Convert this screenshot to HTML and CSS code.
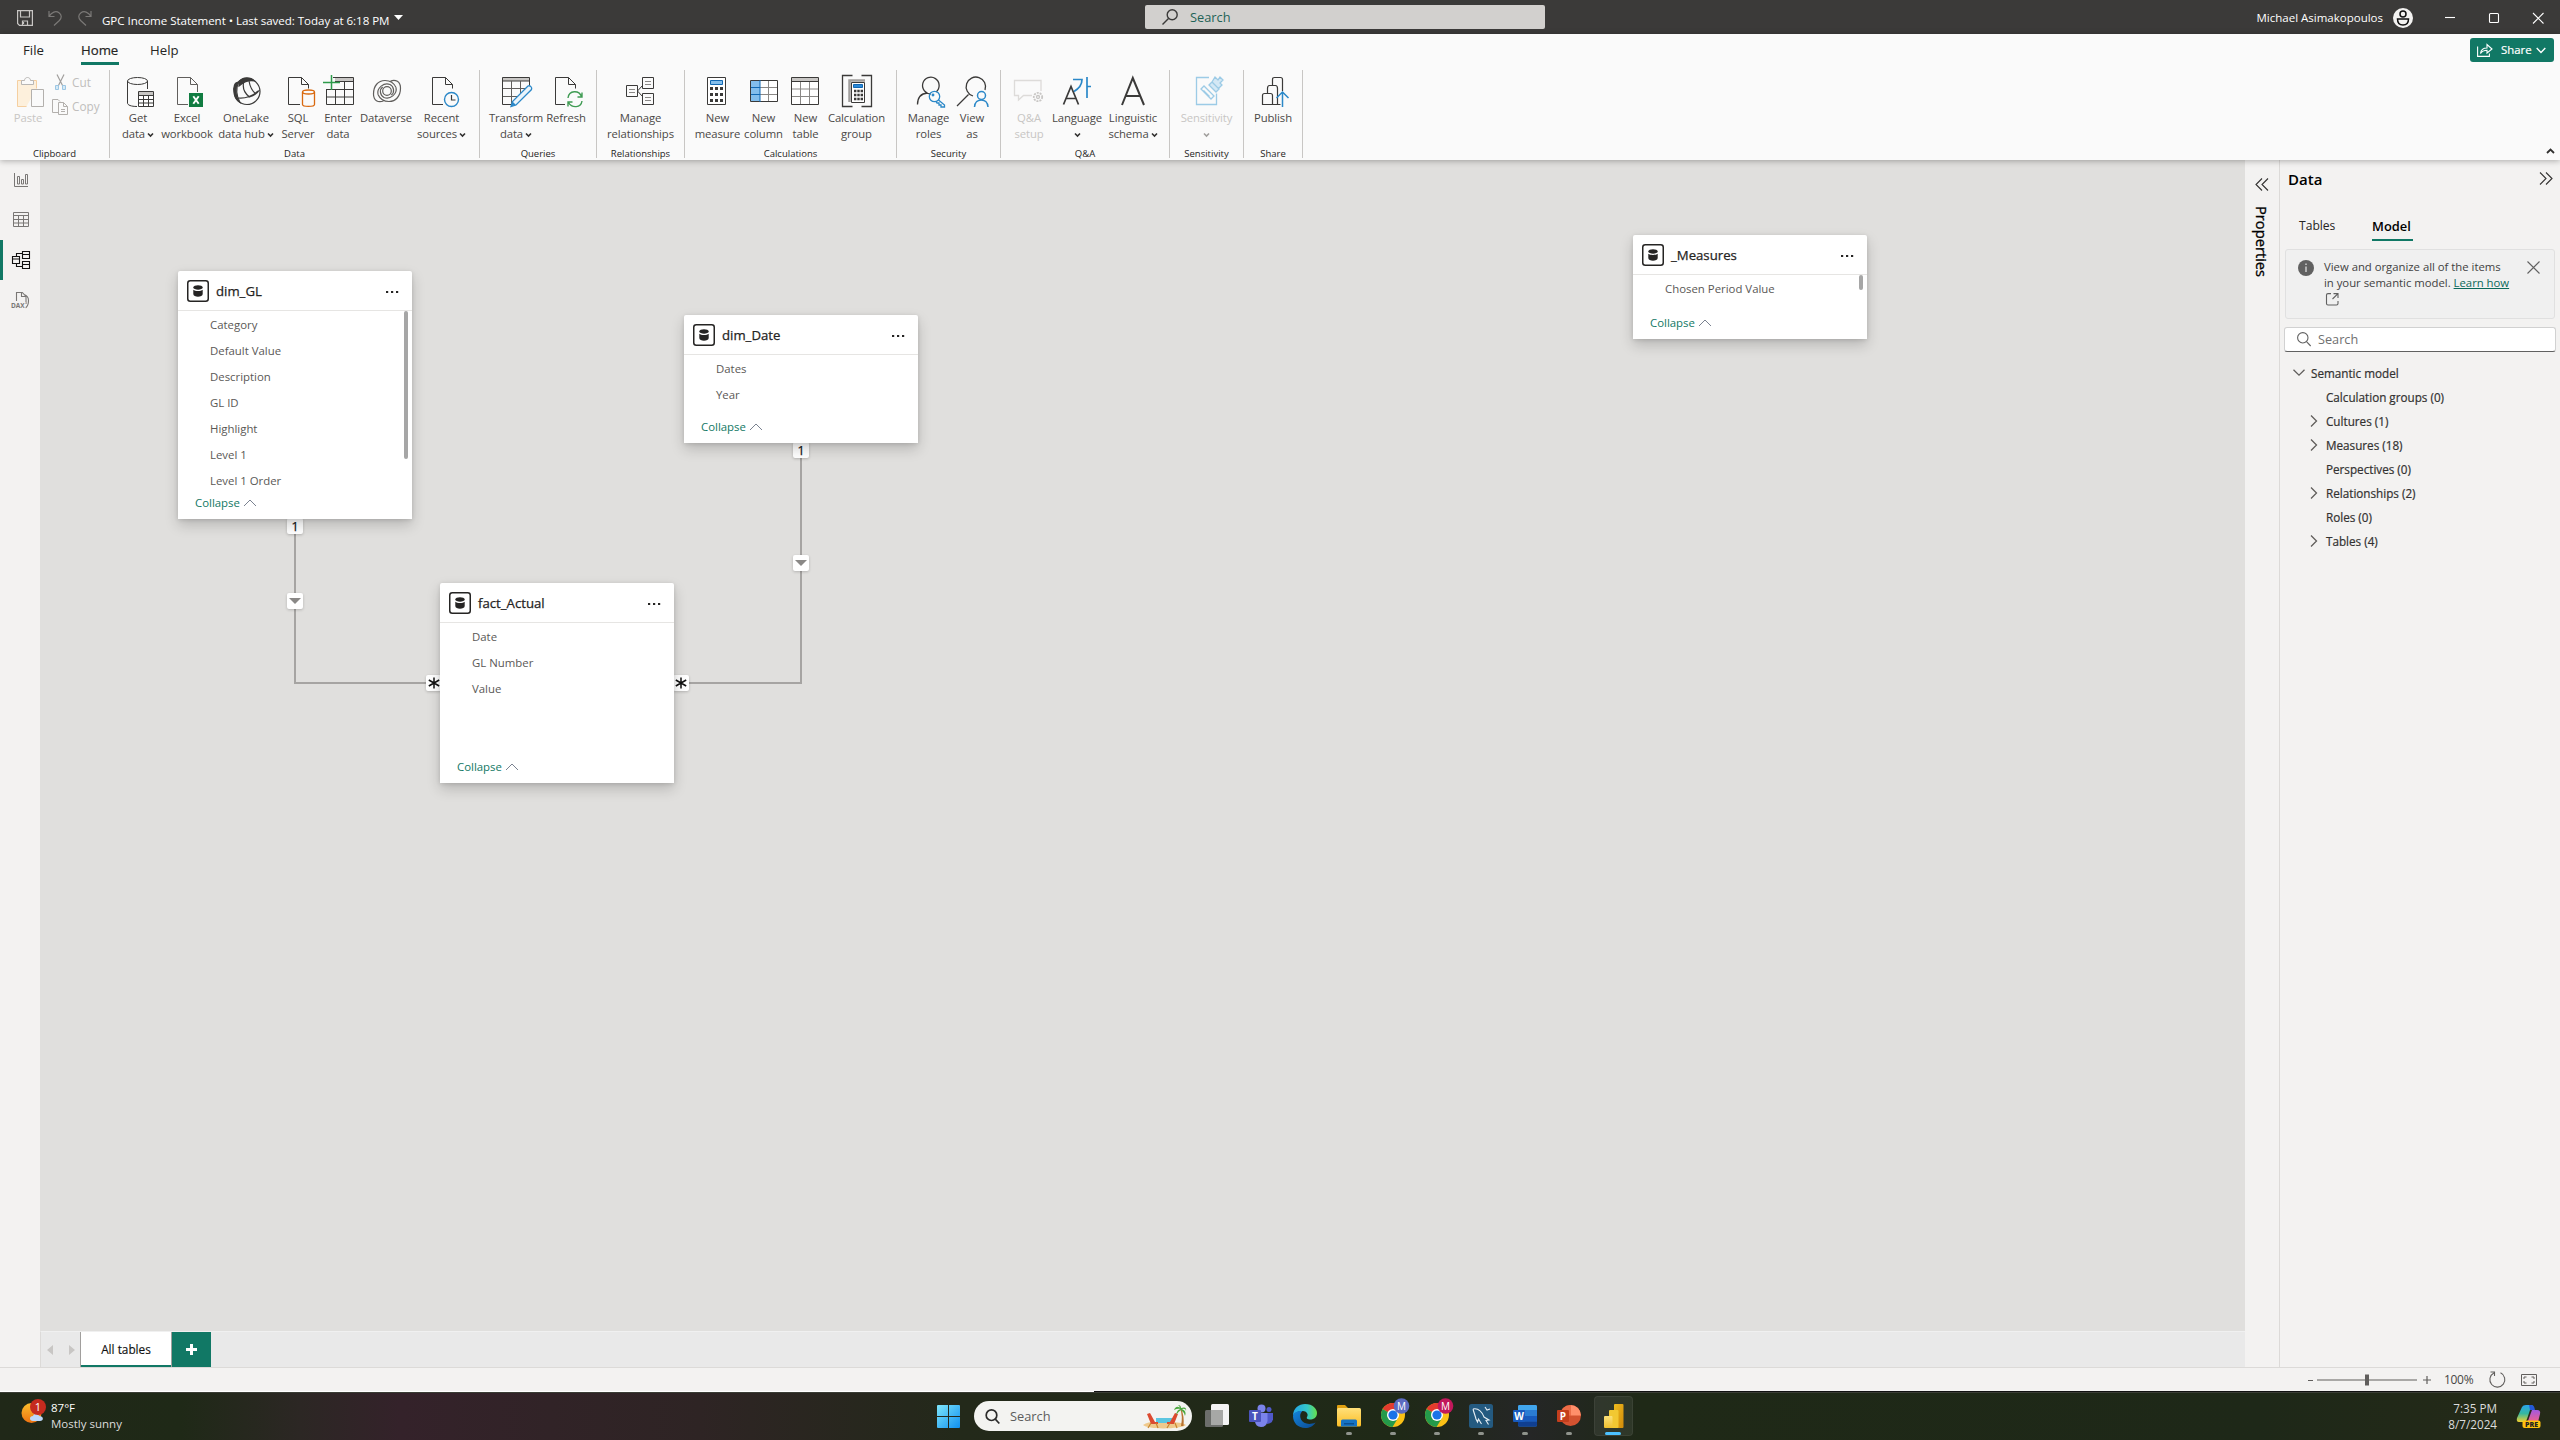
FILE: index.html
```html
<!DOCTYPE html>
<html lang="en">
<head>
<meta charset="utf-8">
<title>GPC Income Statement</title>
<link rel="stylesheet" href="styles.css">
</head>
<body>
<svg class="defs" width="0" height="0">
  <defs>
    <symbol id="chev" viewBox="0 0 7 6"><path d="M1 1.5 3.5 4 6 1.5" fill="none" stroke="currentColor" stroke-width="1.6"/></symbol>
    <symbol id="expand" viewBox="0 0 8 12"><path d="M1 0.5 6.5 6 1 11.500" fill="none" stroke="#605e5c" stroke-width="1.3"/></symbol>
    <symbol id="up" viewBox="0 0 14 8"><path d="M1 7 7 1 13 7" fill="none" stroke="#7a8290" stroke-width="1"/></symbol>
    <symbol id="dbicon" viewBox="0 0 22 22"><rect x="0.75" y="0.75" width="20.500" height="20.500" rx="2.500" fill="#fff" stroke="#252423" stroke-width="1.500"/><path d="M6.300 7.500C6.300 4.600 15.700 4.600 15.700 7.500S6.300 10.300 6.300 7.500Z" fill="#252423"/><path d="M6.300 9.800C8 11.400 14 11.400 15.700 9.800V14C15.700 17.500 6.300 17.500 6.300 14Z" fill="#252423"/></symbol>
    <symbol id="dots" viewBox="0 0 14 4"><path d="M1 1h2.200v2H1zM6 1h2.200v2H6zM11 1h2.200v2H11z" fill="#252423"/></symbol>
    <symbol id="chrome" viewBox="0 0 24 24"><circle cx="12" cy="12" r="12" fill="#fbc116"/><path d="M12 12 1.600 6A12 12 0 0 1 22.400 6Z" fill="#e33b2e"/><path d="M12 12 1.600 6A12 12 0 0 0 11.500 24L17 15Z" fill="#249a4a"/><path d="M12 6h10.400A12 12 0 0 0 12 0Z" fill="#e33b2e"/><circle cx="12" cy="12" r="6" fill="#fff"/><circle cx="12" cy="12" r="4.600" fill="#1a73e8"/></symbol>
    <linearGradient id="win" x1="0" y1="0" x2="1" y2="1"><stop offset="0" stop-color="#7ee6fb"/><stop offset="1" stop-color="#0f8ff0"/></linearGradient>
    <linearGradient id="sun" x1="0" y1="0" x2="0" y2="1"><stop offset="0" stop-color="#fbbd2c"/><stop offset="1" stop-color="#ee7211"/></linearGradient>
    <linearGradient id="edgeTop" x1="0" y1="0" x2="1" y2="0"><stop offset="0" stop-color="#23a5e8"/><stop offset="0.6" stop-color="#35c8c8"/><stop offset="1" stop-color="#66e04a"/></linearGradient>
    <linearGradient id="edgeLow" x1="0" y1="0" x2="1" y2="1"><stop offset="0" stop-color="#1385dc"/><stop offset="1" stop-color="#0c4a92"/></linearGradient>
    <linearGradient id="folder" x1="0" y1="0" x2="0" y2="1"><stop offset="0" stop-color="#ffe07a"/><stop offset="1" stop-color="#fbbd25"/></linearGradient>
    <linearGradient id="pbi" x1="0" y1="0" x2="1" y2="1"><stop offset="0" stop-color="#eebc1e"/><stop offset="1" stop-color="#d18a0a"/></linearGradient>
    <linearGradient id="pbi2" x1="0" y1="0" x2="0" y2="1"><stop offset="0" stop-color="#fbe17a"/><stop offset="1" stop-color="#f0c12e"/></linearGradient>
    <linearGradient id="copA" x1="0" y1="0" x2="0" y2="1"><stop offset="0" stop-color="#2aa3ec"/><stop offset="0.5" stop-color="#35b8a0"/><stop offset="1" stop-color="#f2d02c"/></linearGradient>
    <linearGradient id="copB" x1="0" y1="0" x2="0" y2="1"><stop offset="0" stop-color="#a259e0"/><stop offset="1" stop-color="#f0608a"/></linearGradient>
  </defs>
</svg>
<div class="app">

<header class="titlebar">
  <div class="quick">
    <svg width="16" height="16" viewBox="0 0 16 16" fill="none" stroke="#c8c6c4" stroke-width="1.200"><path d="M.6.6h14.800v14.800H2.500L.6 13.500z"/><path d="M3.500 1v6h9V1M5.500 15v-4h5v4M6.500 12v2"/></svg>
    <svg width="14" height="16" viewBox="0 0 14 16" fill="none" stroke="#7b7977" stroke-width="1.200"><path d="M1 1v5.500h5.500M1.200 6.300C3.500 2 8 .5 11 2.800s2.800 5.200.4 7.700L6 15.500"/></svg>
    <svg width="14" height="16" viewBox="0 0 14 16" fill="none" stroke="#7b7977" stroke-width="1.200"><path d="M13 1v5.500H7.500M12.800 6.300C10.500 2 6 .5 3 2.800S.2 8 2.600 10.500L8 15.500"/></svg>
    <span class="doc">GPC Income Statement • Last saved: Today at 6:18 PM</span>
    <svg class="docarrow" width="9" height="5" viewBox="0 0 9 5"><path d="M0 0h9L4.500 5z" fill="#fff"/></svg>
  </div>
  <div class="topsearch">
    <svg width="16" height="16" viewBox="0 0 16 16" fill="none" stroke="#3b3a39" stroke-width="1.400"><circle cx="10.200" cy="5.800" r="5"/><path d="M6.500 9.500.5 15.500"/></svg>
    <span>Search</span>
  </div>
  <div class="account">
    <span>Michael Asimakopoulos</span>
    <svg class="avatar" width="20" height="20" viewBox="0 0 20 20"><circle cx="10" cy="10" r="10" fill="#f3f2f1"/><circle cx="10" cy="6" r="3" fill="none" stroke="#111" stroke-width="1.500"/><path d="M4.500 11h11c0 4-2 6-5.500 6s-5.500-2-5.500-6z" fill="none" stroke="#111" stroke-width="1.500"/></svg>
    <svg class="winctl" width="99" height="12" viewBox="0 0 99 12" fill="none" stroke="#fff" stroke-width="1.100"><path d="M0 5.500h10"/><rect x="44.500" y="1.500" width="9" height="9" rx="1"/><path d="M88 1l10.500 10.500M98.500 1 88 11.500"/></svg>
  </div>
</header>

<section class="ribbon">
  <div class="tabs">
    <span class="tab-file">File</span><span class="tab-home">Home</span><span class="tab-help">Help</span>
    <div class="share">
      <svg width="16" height="14" viewBox="0 0 16 14" fill="none" stroke="#fff" stroke-width="1.100"><path d="M.6 3.500v9.900h11.800v-3M3.500 10.500c.5-4 3-5.500 6.500-5.500V1.500L15 6l-5 4V7.200c-3 0-5 .8-6.500 3.300z"/></svg>
      <span>Share</span>
      <svg width="10" height="7" viewBox="0 0 10 7"><path d="M.7 1 5 5.500 9.300 1" fill="none" stroke="#fff" stroke-width="1.400"/></svg>
    </div>
  </div>
  <div class="groups">
    <div class="group g-clip">
      <div class="btns">
        <div class="btn w34 off">
          <svg class="ic" viewBox="0 0 32 33" fill="none"><path d="M14.500 31.500h-9v-26h19v8" stroke="#f5cfa0" fill="#fdf0dc"/><path d="M9.500 9.500v-4h3c0-4 6-4 6 0h3v4z" stroke="#b9b7b5" fill="#fafafa"/><path d="M19.500 14.500h12v17h-12z" stroke="#b3b0ad" fill="#fafafa"/></svg>
          <span>Paste</span>
        </div>
        <div class="small">
          <div><svg width="16" height="17" viewBox="0 0 16 17" fill="none"><path d="M5 .5 10.800 12M12 .5 6.200 12" stroke="#a19f9d" stroke-width="1.200"/><path d="M3.500 11.500h3v4h-3zM10.500 11.500h3v4h-3z" stroke="#9cc7e4" fill="#d6e9f5"/></svg>Cut</div>
          <div><svg width="16" height="17" viewBox="0 0 16 17" fill="none" stroke="#b3b0ad"><path d="M6 14.500H.5v-13H6l2 2"/><path d="M6.500 4.500h5l4 4v8h-9zM11.500 4.500v4h4M9 11.500h4M9 13.500h4"/></svg>Copy</div>
        </div>
      </div>
      <div class="gl">Clipboard</div>
    </div>
    <div class="group g-data">
      <div class="btns">
        <div class="btn w44"><svg class="ic" viewBox="0 0 32 33" fill="none" stroke="#3b3a39"><path d="M15 31.500C9 31.500 5.500 30 5.500 28V6"/><ellipse cx="15.500" cy="6" rx="10" ry="3.500"/><path d="M25.500 6v8"/><path d="M16.500 16.500h15v15h-15z" fill="#fff"/><path d="M17 17h14v3H17z" fill="#c8c6c4" stroke="none"/><path d="M16.500 20.500h15M16.500 24.500h15M16.500 28h15M21.500 20.500v11M26.500 20.500v11"/></svg><span>Get<br>data<svg class="cv"><use href="#chev"/></svg></span></div>
        <div class="btn w54"><svg class="ic" viewBox="0 0 32 33" fill="none" stroke="#605e5c"><path d="M17 29.500H6.500v-27h13l7 7V17M19.500 2.500v7h7"/><path d="M18 18h14v14H18z" fill="#107c41" stroke="none"/><path d="m22.300 21.200 5.400 7.600M27.700 21.200l-5.400 7.600" stroke="#fff" stroke-width="1.900"/></svg><span>Excel<br>workbook</span></div>
        <div class="btn w64"><svg class="ic" viewBox="0 0 32 33" fill="none" stroke="#3b3a39" stroke-width="1.200"><circle cx="17" cy="16.500" r="13"/><path d="M4.500 18C2.500 12 5 7 8.500 7.500 5.500 14 6 20 10 27.500 7 26 5 22 4.500 18z" fill="#3b3a39"/><path d="M9 6.500C13 2 20 1.500 24.500 6 19 5 14 6.500 9 11z" fill="#3b3a39"/><path d="M13.500 8c-1 6 2 11 6 14 4-1 8-4 10-7M19 6c1 6 3 10 7 13M8 23c6 .5 14-1 20-7"/></svg><span>OneLake<br>data hub<svg class="cv"><use href="#chev"/></svg></span></div>
        <div class="btn w40"><svg class="ic" viewBox="0 0 32 33" fill="none" stroke="#3b3a39"><path d="M18 29.500H6.500v-27h13l7 7v4M19.500 2.500v7h7"/><path d="M20.500 17v12.500c0 2.500 12 2.500 12 0V17" stroke="#d9690f" stroke-width="1.300"/><ellipse cx="26.500" cy="17" rx="6" ry="2" stroke="#d9690f" stroke-width="1.300"/></svg><span>SQL<br>Server</span></div>
        <div class="btn w40"><svg class="ic" viewBox="0 0 32 33" fill="none" stroke="#3b3a39"><path d="M13 3h18v3H13z" fill="#c8c6c4" stroke="none"/><path d="M11 2.500h20.500v27h-27V14M13 6.500h18.500M4.500 14.500h27M4.500 22h27M13.500 14v15.500M22.500 6.500v23"/><path d="M9.500 0v15M1 7.500h17" stroke="#2e9b4b" stroke-width="1.500"/></svg><span>Enter<br>data</span></div>
        <div class="btn w56"><svg class="ic" viewBox="0 0 32 33" fill="none" stroke="#605e5c" stroke-width="1.200"><circle cx="17" cy="16" r="4.300"/><path d="M13.500 26C8 28 3.500 25.500 3.500 19 3.500 11 8 5.500 15 5.500c5 0 9 2.500 11 7M20.500 6c5-2 10 .5 10 7 0 8-4.500 13.500-11.500 13.500-5 0-9-2.500-11-7"/><path d="M8 19.500C6.500 13 14 7 20 9.500c4 2 5 8 1.300 10.500M26 12.500c1.500 6.500-6 12.500-12 10-4-2-5-8-1.300-10.500"/></svg><span>Dataverse</span></div>
        <div class="btn w55"><svg class="ic" viewBox="0 0 32 33" fill="none" stroke="#3b3a39"><path d="M17 29.500H6.500v-27h13l7 7v4M19.500 2.500v7h7"/><circle cx="25.500" cy="24.500" r="7" stroke="#2b88c8" stroke-width="1.400" fill="#fafafa"/><path d="M25.500 20v5h4" stroke-width="1.200"/></svg><span>Recent<br>sources<svg class="cv"><use href="#chev"/></svg></span></div>
      </div>
      <div class="gl">Data</div>
    </div>
    <div class="group g-query">
      <div class="btns">
        <div class="btn w58"><svg class="ic" viewBox="0 0 32 33" fill="none" stroke="#605e5c"><path d="M2.500 2.500h27v3.500h-27z" fill="#c8c6c4" stroke="#3b3a39"/><path d="M12 29.500H2.500V3M29.500 3v8" stroke="#3b3a39"/><path d="M3 13.500h25M3 21.500h16M11.500 6v23M20.500 6v12"/><path d="m28 11-15.500 15.500-1.500 5 5-1.500L31.500 14.500c1-2-1.500-4.500-3.500-3.500z" fill="#eaf4fb" stroke="#2b88c8" stroke-width="1.300"/><path d="m12.500 26.500-1.500 5 5-1.500z" fill="#2b88c8" stroke="none"/></svg><span>Transform<br>data<svg class="cv"><use href="#chev"/></svg></span></div>
        <div class="btn w42"><svg class="ic" viewBox="0 0 32 33" fill="none" stroke="#3b3a39"><path d="M15 29.500H5.500v-27h13l7 7v4M18.500 2.500v7h7"/><path d="M18 23c1-8 11-8 13.500-1.500M32 17.500v4.500h-4.500M32 26c-1 7-10 7.500-13.500 1.500M18 31.500V27h4.500" stroke="#3f9b53" stroke-width="1.400"/></svg><span>Refresh</span></div>
      </div>
      <div class="gl">Queries</div>
    </div>
    <div class="group g-rel">
      <div class="btns">
        <div class="btn w77"><svg class="ic rel" viewBox="0 0 32 33" fill="none" stroke="#3b3a39"><path d="M2.500 10.500h11v11h-11zM18.500 2.500h11v11h-11zM18.500 18.500h11v11h-11zM13.500 16l5-5.500M13.500 16l5 5.500"/><path d="M5 14.500h6M5 17.500h6M21 6.500h6M21 9.500h6M21 22.500h6M21 25.500h6" stroke="#8a8886"/></svg><span>Manage<br>relationships</span></div>
      </div>
      <div class="gl">Relationships</div>
    </div>
    <div class="group g-calc">
      <div class="btns">
        <div class="btn w47"><svg class="ic" viewBox="0 0 32 33" fill="none" stroke="#3b3a39"><path d="M5.500 2.500h18v27h-18z" fill="#fff"/><path d="M8.500 5.500h12v4h-12z" fill="#83beec" stroke="#1168b3"/><path d="M8 13.500h13M8 19.500h13M8 25.500h13" stroke-width="3" stroke-dasharray="3 2"/></svg><span>New<br>measure</span></div>
        <div class="btn w45"><svg class="ic" viewBox="0 0 32 33" fill="none" stroke="#3b3a39"><path d="M2.500 5.500h27v21h-27z" fill="#fff"/><path d="M12 12.500h17M12 19.500h17M20.500 6v20" stroke="#8a8886"/><path d="M3 6h9v20H3z" fill="#83beec" stroke="none"/><path d="M12 5v22M3 12.500h9M3 19.500h9" stroke="#1168b3"/></svg><span>New<br>column</span></div>
        <div class="btn w39"><svg class="ic" viewBox="0 0 32 33" fill="none" stroke="#3b3a39"><path d="M1.500 2.500h27v27h-27z" fill="#fff"/><path d="M2 3h26v3.500H2z" fill="#c8c6c4" stroke="none"/><path d="M1.500 6.500h27"/><path d="M2 14h26M2 21.500h26M10.500 7v22M19.500 7v22" stroke="#8a8886"/></svg><span>New<br>table</span></div>
        <div class="btn w63"><svg class="ic" viewBox="0 0 32 33" fill="none" stroke="#3b3a39"><path d="M11.500.5h-10v31h10M20.500.5h10v31h-10" stroke-width="1.300"/><path d="M8.500 27V5.500H24" stroke="#a19f9d" stroke-width="2.500"/><path d="M10.500 7.500h13v20h-13z" fill="#fff"/><path d="M12.500 9.500h9v3h-9z" fill="#2b88d8" stroke="#1168b3"/><path d="M13 16h9M13 20h9M13 24h9" stroke-width="2.400" stroke-dasharray="2.400 .9"/></svg><span>Calculation<br>group</span></div>
      </div>
      <div class="gl">Calculations</div>
    </div>
    <div class="group g-sec">
      <div class="btns">
        <div class="btn w49"><svg class="ic" viewBox="0 0 32 33" fill="none" stroke="#3b3a39" stroke-width="1.300"><path d="M23 17a8.300 8.300 0 1 0-5 1.800M4.500 29.500c0-7 4-11 10-11.500"/><g stroke="#2b88c8"><circle cx="21.500" cy="21.500" r="5.200"/><circle cx="20" cy="20" r=".8"/><path d="m25.500 25 6 5v2H28v-2h-2v-2h-2l-1-1.500"/></g></svg><span>Manage<br>roles</span></div>
        <div class="btn w38"><svg class="ic" viewBox="0 0 32 33" fill="none" stroke="#3b3a39" stroke-width="1.300"><path d="M17 21a9.700 9.700 0 1 1 12-6M12.500 19.500 1 31"/><g stroke="#2b88c8" stroke-width="1.500"><circle cx="25.500" cy="20.500" r="4"/><path d="M18.500 32c.5-9.500 13-9.500 13.500 0"/></g></svg><span>View<br>as</span></div>
      </div>
      <div class="gl">Security</div>
    </div>
    <div class="group g-qa">
      <div class="btns">
        <div class="btn w40 off"><svg class="ic" viewBox="0 0 32 33" fill="none" stroke="#dddbd9" stroke-width="1.300"><path d="M28 16V5.500H1.500v15h4v4.500l5-4.500H19"/><circle cx="25" cy="22" r="4.200" stroke="#c8c6c4" stroke-width="1.800" stroke-dasharray="2 1"/><circle cx="25" cy="22" r="1.500" stroke="#c8c6c4"/></svg><span>Q&amp;A<br>setup</span></div>
        <div class="btn w56"><svg class="ic" viewBox="0 0 32 33" fill="none" stroke="#3b3a39" stroke-width="1.700"><path d="M2.500 29.500 10 11.500 17.500 29.500M5 23.500h10"/><path d="M12 4.500h9c0 6-3 9-8 12M26 2v21M26 11.500h4" stroke="#2b88c8"/></svg><span>Language<br><svg class="cv solo"><use href="#chev"/></svg></span></div>
        <div class="btn w56"><svg class="ic" viewBox="0 0 32 33" fill="none" stroke="#3b3a39" stroke-width="2"><path d="M5 30 15.800 3 27 30M8.500 21h15"/></svg><span>Linguistic<br>schema<svg class="cv"><use href="#chev"/></svg></span></div>
      </div>
      <div class="gl">Q&amp;A</div>
    </div>
    <div class="group g-sens">
      <div class="btns">
        <div class="btn w63 off"><svg class="ic" viewBox="0 0 32 33" fill="none" stroke="#9ccbe6" stroke-width="1.300"><path d="M18 2.500H5.500v27h20v-11"/><path d="m10 14 3-3 10 10-3 3zM12.500 15.500l6 6"/><path d="m18 10 3-3 7 7-3 3zM21 7l3-5 3 3 2-3 3 3-3 3 2 2-4 4" fill="#d4e8f5"/></svg><span>Sensitivity<br><svg class="cv solo"><use href="#chev"/></svg></span></div>
      </div>
      <div class="gl">Sensitivity</div>
    </div>
    <div class="group g-share">
      <div class="btns">
        <div class="btn w44"><svg class="ic" viewBox="0 0 32 33" fill="none" stroke="#3b3a39" stroke-width="1.200"><path d="M15.500 29.500h-10v-9q0-2 2-2h6q2 0 2 2zM10.500 18.500v-5q0-3 2-3h6q2 0 2 3v16h-5M15.500 10.500v-6q0-2 2-2h6q2 0 2 2V16M20.500 29.500h3"/><path d="M25.500 32V17M19.500 23l6-6 6 6" stroke="#2b88c8" stroke-width="1.500"/></svg><span>Publish</span></div>
      </div>
      <div class="gl">Share</div>
    </div>
    <svg class="pin" width="9" height="6" viewBox="0 0 9 6"><path d="M1 5 4.500 1.500 8 5" fill="none" stroke="#323130" stroke-width="1.800"/></svg>
  </div>
</section>

<main class="work">
  <nav class="rail">
    <div><svg width="18" height="18" viewBox="0 0 18 18" fill="none" stroke="#797775"><path d="M2.500 2v13.500H16M5.500 5.500h2v7.500h-2zM9.500 8.500h2V13h-2zM13.500 3.500h2V13h-2z"/></svg></div>
    <div><svg width="18" height="18" viewBox="0 0 18 18" fill="none" stroke="#797775"><path d="M1.500 1.500h15v14h-15zM1.500 4.500h15M1.500 8.500h15M1.500 12h15M6.500 4.500v11M11.500 4.500v11"/></svg></div>
    <div class="on"><svg width="18" height="18" viewBox="0 0 18 18" fill="none" stroke="#111" stroke-width="1.100"><path d="M.5 5.500h7v7h-7zM.5 8h7M10.500.5h7v7h-7zM10.500 3.500h7M10.500 10.500h7v7h-7zM10.500 13.500h7M4.500 5.500v-3h6M4.500 12.500v3h6"/></svg></div>
    <div><svg width="18" height="18" viewBox="0 0 18 18" fill="none" stroke="#797775" stroke-width="1.100"><path d="M4.500 10V1.500h5.800l3.700 4v7.500M9.500 1.500v4h4.500M12 3.500c3 1 4.500 3 4.500 6 0 4-1 6-3 7.500"/><text x="-1" y="16.500" class="dax">DAX</text></svg></div>
  </nav>

  <div class="center">
    <div class="canvas">
      <svg class="wires" width="2205" height="1171" fill="none" stroke="#a6a4a2" stroke-width="2"><path d="M255 359V523H400M761 283V523H634"/></svg>

      <span class="tag end t1">1</span>
      <span class="tag t2"><svg width="12" height="6"><path d="M0 0h12L6 6z" fill="#8a8886"/></svg></span>
      <span class="tag side t3"><svg width="12" height="12" viewBox="0 0 12 12" stroke="#111" stroke-width="1.500"><path d="M6 .5v11M.8 3l10.400 6M11.200 3 .8 9"/></svg></span>
      <span class="tag end t4">1</span>
      <span class="tag t5"><svg width="12" height="6"><path d="M0 0h12L6 6z" fill="#8a8886"/></svg></span>
      <span class="tag side t6"><svg width="12" height="12" viewBox="0 0 12 12" stroke="#111" stroke-width="1.500"><path d="M6 .5v11M.8 3l10.400 6M11.200 3 .8 9"/></svg></span>

      <article class="card c-gl">
        <header><svg width="22" height="22"><use href="#dbicon"/></svg><b>dim_GL</b><svg width="14" height="4"><use href="#dots"/></svg></header>
        <ul><li>Category</li><li>Default Value</li><li>Description</li><li>GL ID</li><li>Highlight</li><li>Level 1</li><li>Level 1 Order</li></ul>
        <i class="bar long"></i>
        <footer>Collapse<svg width="14" height="8"><use href="#up"/></svg></footer>
      </article>
      <article class="card c-date">
        <header><svg width="22" height="22"><use href="#dbicon"/></svg><b>dim_Date</b><svg width="14" height="4"><use href="#dots"/></svg></header>
        <ul><li>Dates</li><li>Year</li></ul>
        <footer>Collapse<svg width="14" height="8"><use href="#up"/></svg></footer>
      </article>
      <article class="card c-fact">
        <header><svg width="22" height="22"><use href="#dbicon"/></svg><b>fact_Actual</b><svg width="14" height="4"><use href="#dots"/></svg></header>
        <ul><li>Date</li><li>GL Number</li><li>Value</li></ul>
        <footer>Collapse<svg width="14" height="8"><use href="#up"/></svg></footer>
      </article>
      <article class="card c-meas">
        <header><svg width="22" height="22"><use href="#dbicon"/></svg><b>_Measures</b><svg width="14" height="4"><use href="#dots"/></svg></header>
        <ul><li>Chosen Period Value</li></ul>
        <i class="bar"></i>
        <footer>Collapse<svg width="14" height="8"><use href="#up"/></svg></footer>
      </article>
    </div>
    <div class="pages">
      <svg class="arrows" width="28" height="10" viewBox="0 0 28 10" fill="#c8c6c4"><path d="M6 0v10L0 5zM22 0v10l6-5z"/></svg>
      <span class="page">All tables</span>
      <span class="plus"><svg width="11" height="11"><path d="M5.500 0v11M0 5.500h11" stroke="#fff" stroke-width="3"/></svg></span>
    </div>
  </div>

  <aside class="props">
    <svg width="14" height="13" viewBox="0 0 14 13" fill="none" stroke="#323130" stroke-width="1.100"><path d="M7 .5l-6 6 6 6M13 .5l-6 6 6 6"/></svg>
    <b>Properties</b>
  </aside>

  <aside class="data">
    <div class="dhead"><b>Data</b><svg width="14" height="13" viewBox="0 0 14 13" fill="none" stroke="#323130" stroke-width="1.100"><path d="M1 .5l6 6-6 6M7 .5l6 6-6 6"/></svg></div>
    <div class="dtabs"><span>Tables</span><b>Model</b></div>
    <div class="note">
      <svg width="16" height="16" viewBox="0 0 16 16"><circle cx="8" cy="8" r="8" fill="#616161"/><path d="M8 3.500v1.500M8 6.500V12" stroke="#dcdcdc" stroke-width="1.300"/></svg>
      <p>View and organize all of the items<br>in your semantic model. <a>Learn how</a><br><svg width="14" height="13" viewBox="0 0 14 13" fill="none" stroke="#616161" stroke-width="1.100"><path d="M6 .6H3Q1.500.6 1.500 2v8.500q0 1.500 1.500 1.500h8.500q1.500 0 1.500-1.500V8M8.500.6H13V5M13 .6 7.500 6"/></svg></p>
      <svg width="13" height="13" viewBox="0 0 13 13"><path d="M.5.5l12 12M12.500.5l-12 12" stroke="#616161" stroke-width="1.100"/></svg>
    </div>
    <div class="dsearch"><svg width="14" height="15" viewBox="0 0 14 15" fill="none" stroke="#616161" stroke-width="1.100"><circle cx="5.800" cy="5.800" r="5.200"/><path d="m9.500 9.700 4.200 4.300"/></svg>Search</div>
    <ul class="tree">
      <li class="root"><svg width="12" height="7" viewBox="0 0 12 7"><path d="M.5.8 6 6.200 11.500.8" fill="none" stroke="#605e5c" stroke-width="1.300"/></svg>Semantic model</li>
      <li>Calculation groups (0)</li>
      <li><svg width="8" height="12"><use href="#expand"/></svg>Cultures (1)</li>
      <li><svg width="8" height="12"><use href="#expand"/></svg>Measures (18)</li>
      <li>Perspectives (0)</li>
      <li><svg width="8" height="12"><use href="#expand"/></svg>Relationships (2)</li>
      <li>Roles (0)</li>
      <li><svg width="8" height="12"><use href="#expand"/></svg>Tables (4)</li>
    </ul>
  </aside>
</main>

<footer class="status">
  <svg width="124" height="12" viewBox="0 0 124 12"><path d="M0 6.500h5M9 6h100M115 6h8M119 2v8" stroke="#605e5c" stroke-width="1.200"/><path d="M57 .5h4v11h-4z" fill="#605e5c"/></svg>
  <span>100%</span>
  <svg width="17" height="17" viewBox="0 0 17 17" fill="none" stroke="#605e5c" stroke-width="1.100"><path d="M11.500 1.800A7.500 7.500 0 1 1 4.800 2M1.500 1h4v4"/></svg>
  <svg width="16" height="12" viewBox="0 0 16 12" fill="none" stroke="#605e5c"><path d="M.5.5h15v11H.5z"/><path d="M5.500 3H3v2M10.500 3H13v2M5.500 9H3V7M10.500 9H13V7"/></svg>
</footer>

<footer class="taskbar">
  <div class="weather">
    <svg width="24" height="24" viewBox="0 0 24 24"><circle cx="10.500" cy="14" r="10" fill="url(#sun)"/><path d="M12 22c-4 0-4-5 0-5 1-3 5-3 6 0 5 0 5 5 1 5z" fill="#bcd8fa"/><circle cx="17" cy="8" r="8" fill="#c52b1f"/><text x="17" y="12" class="bdg">1</text></svg>
    <p><b>87°F</b><br>Mostly sunny</p>
  </div>
  <div class="dock">
    <svg class="start" width="23" height="23" viewBox="0 0 23 23"><path d="M0 1q0-1 1-1h10v11H0zM12 0h10q1 0 1 1v10H12zM0 12h11v11H1q-1 0-1-1zM12 12h11v10q0 1-1 1H12z" fill="url(#win)"/></svg>
    <div class="pill">
      <svg width="15" height="15" viewBox="0 0 15 15" fill="none" stroke="#2b2b2b" stroke-width="1.700"><circle cx="6.500" cy="6.200" r="5.300"/><path d="m10.300 10.200 4 4.300"/></svg>
      <span>Search</span>
      <svg width="43" height="25" viewBox="0 0 43 25"><path d="M0 21c5-4 12-3 21-3s18 0 22 3c-4 4-38 5-43 0z" fill="#efc98c"/><path d="M13 14h17v5H13z" fill="#5cc6e0"/><path d="M4 10l3-1 5 9h3v2H8zM35 10l-3-1-5 9h-3v2h7z" fill="#dc4a30"/><path d="M8 19l-3 5M13 19l2 5M27 19l-3 5M32 19l2 5" stroke="#c8862e" stroke-width="1.200"/><path d="M37 4q3 8 1 18h2.500q1-10-2.500-18z" fill="#b87333"/><path d="M38 5C35 1 32 3 31 6q4-2 7-1-4 0-5 6 3-4 5-5 3 2 4 6 2-5-3-7 4-1 4 2 1-5-5-3 0-3-3-3 2 1 2 4z" fill="#4ba83e"/></svg>
    </div>
    <div class="app-i"><svg width="24" height="24" viewBox="0 0 24 24"><rect x="6" y="0" width="18" height="21" rx="1.500" fill="#f4f4f4"/><rect x="0" y="6" width="18" height="17" rx="1.500" fill="#6c6e6b"/><path d="M6 6h12v15H6z" fill="#a7a8a6"/></svg></div>
    <div class="app-i"><svg width="24" height="24" viewBox="0 0 24 24"><circle cx="12.500" cy="4.500" r="4" fill="#7b83eb"/><circle cx="20" cy="5.500" r="2.500" fill="#5059c9"/><path d="M16 9h8v6.500q-1 4.500-6 4.500z" fill="#5059c9"/><path d="M6 9h12.500v8q-1 6-6.500 6-6-.5-6-6z" fill="#7b83eb"/><rect x="0" y="6" width="12" height="12" rx="1" fill="#4b53bc"/><text x="6" y="15.500" class="let">T</text></svg></div>
    <div class="app-i"><svg width="24" height="24" viewBox="0 0 24 24"><path d="M0 12C0 4 6 0 12 0c8 0 12 5 12 9 0 5-4 6.500-7 6.500-2.500 0-4-1-3-2.500 2-3-1-6-4-6C5 7 1 9 0 12z" fill="url(#edgeTop)"/><path d="M0 12C1 8 5 6.500 9.500 7 7 9 6.500 12 8 15.500c2 4 8 6 14.500 3C20 22.500 16.500 24 12.500 24 5 24 0 19 0 12z" fill="url(#edgeLow)"/></svg></div>
    <div class="app-i run"><svg width="24" height="24" viewBox="0 0 24 24"><path d="M0 2q0-1 1-1h7l3 3v4H0z" fill="#e0a010"/><rect y="4" width="24" height="18.500" rx="1.500" fill="url(#folder)"/><path d="M4 22.500V17q0-1.500 1.500-1.500h13q1.500 0 1.500 1.500v5.500z" fill="#1673c4"/><path d="M7 19h10v1.500H7z" fill="#0b4f92"/></svg></div>
    <div class="app-i run wide"><svg width="28" height="30" viewBox="0 0 28 30"><use href="#chrome" y="4" width="24" height="24"/><circle cx="20.500" cy="7" r="7.800" fill="#5c6bc0"/><text x="20.500" y="10.800" class="let thin">M</text></svg></div>
    <div class="app-i run wide"><svg width="28" height="30" viewBox="0 0 28 30"><use href="#chrome" y="4" width="24" height="24"/><circle cx="20.500" cy="7" r="7.800" fill="#c2185b"/><text x="20.500" y="10.800" class="let thin">M</text></svg></div>
    <div class="app-i run"><svg width="24" height="24" viewBox="0 0 24 24"><rect width="24" height="24" rx="2.500" fill="#245a80"/><path d="M4 5c5-1 9 3 11 8l5 3-3 .5 2.500 4M4 5c1 4 2 6 3 10l1.500 3 1-3 3 5M16 3l2 3 3-1" fill="none" stroke="#e8f0f5" stroke-width="1.100"/></svg></div>
    <div class="app-i run"><svg width="24" height="24" viewBox="0 0 24 24"><rect x="5" y="1" width="19" height="21.500" rx="1.500" fill="#2b7cd3"/><path d="M5 2.500Q5 1 6.500 1h16Q24 1 24 2.500V6H5z" fill="#41a5ee"/><path d="M5 12h19v5.500H5z" fill="#185abd"/><path d="M5 17.500h19V21q0 1.500-1.500 1.500h-16Q5 22.500 5 21z" fill="#103f91"/><rect y="6" width="12" height="12" rx="1" fill="#185abd"/><text x="6" y="15.500" class="let">W</text></svg></div>
    <div class="app-i run"><svg width="24" height="24" viewBox="0 0 24 24"><circle cx="13.500" cy="11.500" r="10.500" fill="#d35230"/><path d="M13.500 1A10.500 10.500 0 0 1 24 11.500H13.500z" fill="#ff8f6b"/><path d="M13.500 1A10.500 10.500 0 0 0 3 11.500h10.500z" fill="#ed6c47"/><rect y="6" width="12" height="12" rx="1" fill="#c43e1c"/><text x="6" y="15.500" class="let">P</text></svg></div>
    <div class="app-i active"><svg width="20" height="24" viewBox="0 0 20 24"><rect x="10" width="9.500" height="24" rx="1" fill="url(#pbi)"/><rect x="5" y="6" width="9.500" height="18" rx="1" fill="#f2c832"/><rect y="12" width="8.500" height="12" rx="1" fill="url(#pbi2)"/></svg></div>
  </div>
  <div class="tray">
    <p>7:35 PM<br>8/7/2024</p>
    <svg width="24" height="24" viewBox="0 0 24 24"><path d="M5 2q1-2 4-2h7q-2 1-3 5l-3 9q-1 3-4 3H2q-3 0-2-4z" fill="url(#copA)"/><path d="M12 0h2q3 0 3.500 3L18 5h-5z" fill="#2458d8"/><path d="M15 5h5q4 0 3 4l-2 8H9q2 0 3-4z" fill="url(#copB)"/><rect x="5.500" y="15.500" width="18" height="7.500" rx="2" fill="#ffc20e"/><text x="14.500" y="21.800" class="pre">PRE</text></svg>
  </div>
</footer>
</div>
</body>
</html>
```
FILE: styles.css
```css
* { box-sizing: border-box; margin: 0; padding: 0; }
body { width: 2560px; height: 1440px; overflow: hidden; font: 11.3px/16px "Open Sans", "Noto Sans", sans-serif; color: #252423; background: #f3f2f1; }
.defs { position: absolute; }
svg { display: block; flex: none; overflow: visible; }
ul { list-style: none; }
.app { display: flex; flex-direction: column; width: 2560px; height: 1440px; white-space: nowrap; }
b { font-weight: 600; }

/* title bar */
.titlebar { height: 34px; background: #3b3a39; color: #fff; display: flex; align-items: flex-start; justify-content: space-between; }
.quick { display: flex; width: 1145px; padding: 10px 0 0 17px; }
.quick svg + svg { margin-left: 15px; }
.quick svg:nth-child(3) { margin-left: 16px; }
.doc { margin: 3px 0 0 10px; width: 286px; font-size: 11.6px; letter-spacing: -.06px; }
.quick .docarrow { margin: 5px 0 0 6px; }
.topsearch { width: 400px; height: 24px; margin-top: 5px; padding-left: 17px; border-radius: 2px; background: #d2d0ce; color: #1f6357; font-size: 12.8px; display: flex; align-items: center; gap: 12px; }
.account { width: 1015px; height: 34px; display: flex; align-items: center; justify-content: flex-end; padding: 2px 16px 1px 0; font-size: 11.5px; }
.avatar { margin: 0 32px 0 10px; }

/* ribbon */
.ribbon { height: 126px; background: #fafafa; position: relative; z-index: 3; box-shadow: 0 1px 6px rgba(0,0,0,.3); }
.tabs { height: 36px; display: flex; align-items: flex-start; padding: 4px 6px 0 23px; font-size: 13.2px; line-height: 24px; }
.tab-file { width: 58px; }
.tab-home { width: 38px; height: 27px; margin-right: 31px; border-bottom: 3px solid #117865; -webkit-text-stroke: .2px; }
.tab-help { flex: 1; }
.share { width: 84px; height: 24px; border-radius: 3px; background: #117865; color: #fff; font-size: 11.4px; display: flex; align-items: center; gap: 5px; padding-left: 7px; -webkit-text-stroke: .2px; }
.share span { width: 30px; margin-left: 3px; }
.groups { display: flex; height: 88px; }
.group { border-right: 1px solid #c8c6c4; display: flex; flex-direction: column; justify-content: space-between; }
.btns { display: flex; padding-top: 5px; }
.btn { text-align: center; color: #4a4846; display: flex; flex-direction: column; align-items: center; gap: 2px; }
.btn span { display: block; letter-spacing: -.1px; }
.ic { width: 32px; height: 33px; }
.rel { margin-right: 2px; }
.cv { display: inline-block; width: 7px; height: 6px; margin-left: 2px; color: #323130; }
.cv.solo { margin: 0; }
.off, .off .cv { color: #c8c6c4; }
.off .cv { color: #a19f9d; }
.gl { text-align: center; font-size: 9.5px; line-height: 11px; height: 10px; }
.small { margin: -5px 0 0 7px; color: #c0bebc; font-size: 11.8px; }
.small div { display: flex; height: 24px; align-items: center; gap: 4px; }
.w34 { width: 34px; } .w38 { width: 38px; } .w39 { width: 39px; } .w40 { width: 40px; } .w42 { width: 42px; } .w44 { width: 44px; } .w45 { width: 45px; } .w47 { width: 47px; } .w49 { width: 49px; } .w54 { width: 54px; } .w55 { width: 55px; } .w56 { width: 56px; } .w58 { width: 58px; } .w63 { width: 63px; } .w64 { width: 64px; } .w77 { width: 77px; }
.g-clip { width: 110px; } .g-clip .btns { padding-left: 11px; }
.g-data { width: 370px; } .g-data .btns { padding-left: 6px; }
.g-query { width: 117px; } .g-query .btns { padding-left: 7px; }
.g-rel { width: 88px; } .g-rel .btns { padding-left: 5px; }
.g-calc { width: 212px; } .g-calc .btns { padding-left: 9px; }
.g-sec { width: 104px; } .g-sec .btns { padding-left: 7px; }
.g-qa { width: 169px; } .g-qa .btns { padding-left: 8px; }
.g-sens { width: 74px; } .g-sens .btns { padding-left: 5px; }
.g-share { width: 59px; } .g-share .btns { padding-left: 7px; }
.pin { margin: 78px 5px 0 auto; }

/* work area */
.work { height: 1207px; display: flex; }
.rail { width: 40px; }
.rail div { height: 40px; padding: 11px 0 0 12px; }
.rail .on { border-left: 3px solid #117865; padding-left: 9px; }
.dax { font-size: 6.5px; font-weight: 700; fill: #797775; stroke: #f3f2f1; stroke-width: 1.5px; paint-order: stroke; }
.center { width: 2205px; display: flex; flex-direction: column; }
.canvas { height: 1171px; background: #e0dfdd; position: relative; overflow: hidden; }
.wires { position: absolute; left: 0; top: 0; }
.card { position: absolute; width: 234px; background: #fff; border-radius: 2px; box-shadow: 0 6px 14px rgba(0,0,0,.18), 0 1px 4px rgba(0,0,0,.12); display: flex; flex-direction: column; }
.card header { height: 40px; border-bottom: 1px solid #e6e5e3; display: flex; align-items: center; padding: 0 13px 0 9px; }
.card header b { flex: 1; font-size: 13.2px; margin-left: 7px; font-weight: 500; -webkit-text-stroke: .25px; }
.card header svg:last-child { margin-top: 3px; }
.card ul { flex: 1; padding: 2px 0 0 32px; min-height: 0; }
.card li { height: 26px; line-height: 24px; color: #5a5856; font-size: 11.4px; }
.card footer { height: 30px; padding: 0 0 3px 17px; display: flex; align-items: center; gap: 3px; color: #117865; background: #fff; font-size: 11.4px; }
.bar { position: absolute; right: 4px; top: 40px; width: 4px; height: 15px; border-radius: 2px; background: #a6a6a6; }
.bar.long { height: 148px; }
.c-gl { left: 138px; top: 111px; height: 248px; }
.c-date { left: 644px; top: 155px; height: 128px; }
.c-fact { left: 400px; top: 423px; height: 200px; }
.c-meas { left: 1593px; top: 75px; height: 104px; }
.tag { position: absolute; width: 16px; height: 16px; border-radius: 2px; background: #fff; color: #111; font-size: 12.5px; display: flex; align-items: center; justify-content: center; box-shadow: 0 1px 3px rgba(0,0,0,.2); }
.end { padding-top: 1px; -webkit-text-stroke: .25px; }
.t1 { left: 247px; top: 358px; } .t2 { left: 247px; top: 433px; } .t3 { left: 386px; top: 515px; }
.t4 { left: 753px; top: 282px; } .t5 { left: 753px; top: 395px; } .t6 { left: 633px; top: 515px; }
.pages { height: 36px; background: #e9e9e9; border-left: 1px solid #dcdad8; border-top: 1px solid #f0f0f0; display: flex; }
.arrows { margin: 13px 5px 0 6px; }
.page { width: 92px; border: solid #a19f9d; border-width: 0 1px; background: #fff; box-shadow: inset 0 -2px #117865; text-align: center; line-height: 35px; font-size: 11.8px; color: #111; -webkit-text-stroke: .15px; }
.plus { width: 39px; background: #117865; display: flex; align-items: center; justify-content: center; }
.props { width: 35px; border-right: 1px solid #dcdad8; display: flex; flex-direction: column; align-items: center; padding: 18px 0 0; gap: 15px; }
.props b { writing-mode: vertical-rl; font-size: 14.7px; line-height: 20px; color: #000; font-weight: 500; -webkit-text-stroke: .3px; }

/* data pane */
.data { width: 280px; padding: 0 4px 0 5px; }
.dhead { height: 40px; display: flex; align-items: center; justify-content: space-between; padding: 0 3px 4px 3px; font-size: 15px; color: #000; }
.dhead b { padding-top: 2px; }
.dtabs { height: 49px; padding: 16px 0 0 14px; display: flex; font-size: 12.1px; line-height: 20px; color: #252423; }
.dtabs span { width: 73px; }
.dtabs b { width: 41px; height: 25px; border-bottom: 2px solid #117865; color: #000; font-size: 12.9px; }
.note { height: 70px; width: 270px; border: 1px solid #e0e0e0; border-radius: 3px; background: #f0f0f0; color: #424242; display: flex; padding: 9px 14px 0 12px; font-size: 11.35px; letter-spacing: -.02px; }
.note > svg { margin-top: 1px; }
.note > svg:last-child { margin-top: 2px; }
.note p { flex: 1; margin-left: 10px; }
.note p svg { margin-top: 2px; margin-left: 1px; }
.note a { color: #0c695a; text-decoration: underline; }
.dsearch { height: 25px; width: 272px; margin: 8px 0 9px -1px; border: 1px solid #d1d1d1; border-bottom: 1px solid #616161; border-radius: 3px; background: #fff; display: flex; align-items: center; gap: 7px; padding: 0 0 1px 12px; color: #707070; font-size: 12.7px; }
.tree li { height: 24px; display: flex; align-items: center; padding-left: 41px; font-size: 11.7px; color: #323130; -webkit-text-stroke: .2px; }
.tree li svg { margin: -1px 8px 0 -16px; }
.tree .root { padding-left: 8px; }
.tree .root svg { margin: -1px 6px 0 0; }

/* status bar */
.status { height: 25px; border-top: 1px solid #dcdad8; background: linear-gradient(90deg, #fff 1094px, #111 1094px) bottom / 100% 1px no-repeat; display: flex; align-items: center; justify-content: flex-end; padding: 0 23px 1px 0; color: #484644; font-size: 12px; }
.status span { width: 30px; margin: 0 15px 0 12px; letter-spacing: -.3px; }
.status svg:last-child { margin-left: 15px; }

/* taskbar */
.taskbar { height: 48px; display: flex; justify-content: space-between; color: #dcdcdc; box-shadow: inset 0 1px #3a3d35; background: linear-gradient(90deg, #202818 0, #1f2917 180px, #2c2724 300px, #34222a 400px, #2e2424 700px, #23291a 960px, #1f2917 1400px, #252626 1530px, #1f2917 1640px, #1e2818 2260px, #252a18 2560px); }
.weather { width: 931px; display: flex; padding: 8px 0 0 21px; gap: 6px; font-size: 11.5px; }
.weather svg { margin-top: -1px; }
.weather b { color: #fff; font-weight: 500; }
.bdg { font-size: 11px; fill: #fff; text-anchor: middle; }
.dock { flex: 1; display: flex; }
.start { margin: 13px 14px 0 6px; }
.pill { width: 218px; height: 30px; margin: 9px 3px 0 0; border-radius: 15px; background: #f3f3f1; display: flex; align-items: center; padding: 0 6px 0 11px; color: #5c5c5c; font-size: 12.8px; }
.pill span { flex: 1; margin-left: 10px; }
.app-i { width: 44px; height: 48px; display: flex; justify-content: center; align-items: center; position: relative; }
.wide { padding: 0 0 4px 4px; }
.run::after, .active::after { content: ""; position: absolute; bottom: 5px; left: 19px; width: 6px; height: 3px; border-radius: 2px; background: #8f938c; }
.active { width: 39px; height: 40px; margin: 4px 0 0 3px; border-radius: 4px; background: rgba(255,255,255,.07); box-shadow: inset 0 0 0 1px rgba(255,255,255,.06); }
.active::after { bottom: 1px; left: 11px; width: 16px; background: #4cc2ff; }
.let { font-size: 10px; font-weight: 700; fill: #fff; text-anchor: middle; }
.thin { font-weight: 500; }
.tray { display: flex; padding: 8px 19px 0 0; gap: 20px; text-align: right; font-size: 11.7px; }
.tray svg { margin-top: 5px; }
.pre { font-size: 7px; font-weight: 800; fill: #222; text-anchor: middle; }
```
